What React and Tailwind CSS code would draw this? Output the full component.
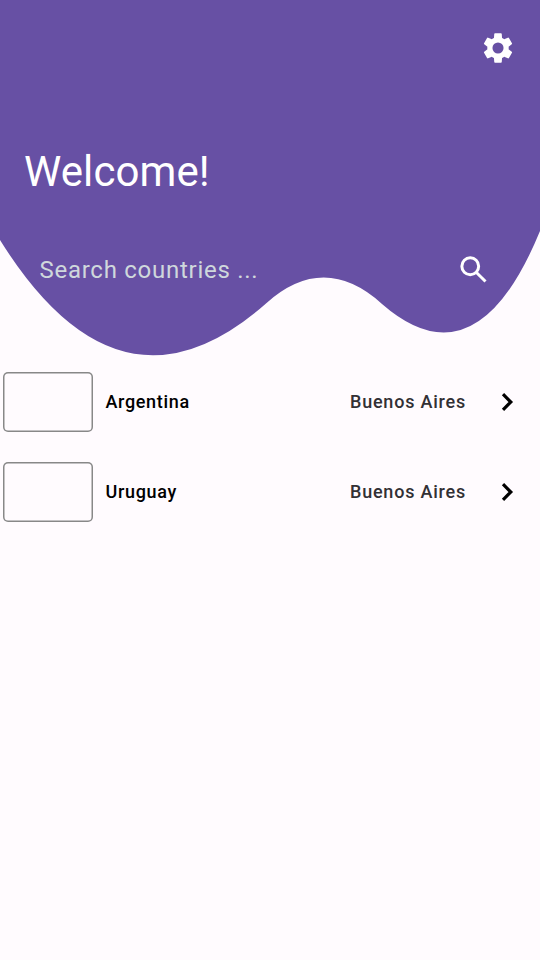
const countries = [
  { name: 'Argentina', capital: 'Buenos Aires' },
  { name: 'Uruguay', capital: 'Buenos Aires' },
];

function GearIcon() {
  return (
    <svg className="size-9 text-white" viewBox="0 0 24 24" fill="currentColor" aria-label="Settings">
      <path
        fillRule="evenodd"
        d="M10 2.2h4q.45 0 .5.45l.2 2.7q.8.3 1.4.8l2.45-1.05q.5-.18.75.25l2 3.45q.22.44-.14.7l-2.11 1.6q.1.45.1.9t-.1.9l2.11 1.6q.36.26.14.7l-2 3.45q-.25.43-.75.25l-2.45-1.05q-.6.5-1.4.8l-.2 2.7q-.05.45-.5.45h-4q-.45 0-.5-.45l-.2-2.7q-.8-.3-1.4-.8l-2.45 1.05q-.5.18-.75-.25l-2-3.45q-.22-.44.14-.7l2.11-1.6q-.1-.45-.1-.9t.1-.9l-2.11-1.6q-.36-.26-.14-.7l2-3.45q.25-.43.75-.25l2.45 1.05q.6-.5 1.4-.8l.2-2.7q.05-.45.5-.45zM12 8.3a3.7 3.7 0 1 0 0 7.4a3.7 3.7 0 1 0 0-7.4z"
      />
    </svg>
  );
}

function SearchIcon() {
  return (
    <svg className="size-9 text-white" viewBox="0 0 36 36" fill="none" stroke="currentColor" strokeWidth="3" aria-label="Search">
      <circle cx="14.25" cy="14.25" r="8.4" />
      <path d="M20.2 20.2L29.5 29.5" />
    </svg>
  );
}

function Chevron() {
  return (
    <svg className="size-9" viewBox="0 0 36 36" fill="none" stroke="black" strokeWidth="3.2" aria-hidden="true">
      <path d="M14 10.2L21.8 18L14 25.8" />
    </svg>
  );
}

function Header() {
  return (
    <header className="relative h-[357px]">
      <svg className="absolute inset-0 h-[357px] w-[540px]" viewBox="0 0 540 357" aria-hidden="true">
        <path fill="#6750a4" d="M0 0H540V231Q476.3 386.3 382 304Q324 251.5 266 303.5Q119.9 432.5 0 240Z" />
      </svg>
      <div className="relative flex flex-col">
        <div className="flex justify-end pt-[30px] pr-6">
          <GearIcon />
        </div>
        <h1 className="mt-[79px] ml-6 text-[42px] leading-[54px] tracking-[0.1px] text-white">Welcome!</h1>
        <div className="mt-[53px] mr-12 ml-[39.5px] flex h-9 items-center justify-between">
          <span className="text-2xl tracking-[0.73px] text-[#cfd8dc]">Search countries ...</span>
          <SearchIcon />
        </div>
      </div>
    </header>
  );
}

function CountryRow({ name, capital }) {
  return (
    <li className="flex h-[90px] items-center pl-[3px]">
      <div className="h-[60px] w-[90px] rounded-[5px] shadow-[inset_0_0_0_1.5px_#888888]" />
      <span className="ml-[12.5px] w-[244.5px] text-lg font-medium tracking-[0.66px] text-black">{name}</span>
      <span className="w-[139px] text-lg font-medium tracking-[0.78px] text-[#323034]">{capital}</span>
      <Chevron />
    </li>
  );
}

export default function App() {
  return (
    <main className="h-[960px] w-[540px] overflow-hidden bg-[#fffbfe] font-[Roboto,sans-serif]">
      <Header />
      <ul>
        {countries.map((country) => <CountryRow key={country.name} {...country} />)}
      </ul>
    </main>
  );
}
